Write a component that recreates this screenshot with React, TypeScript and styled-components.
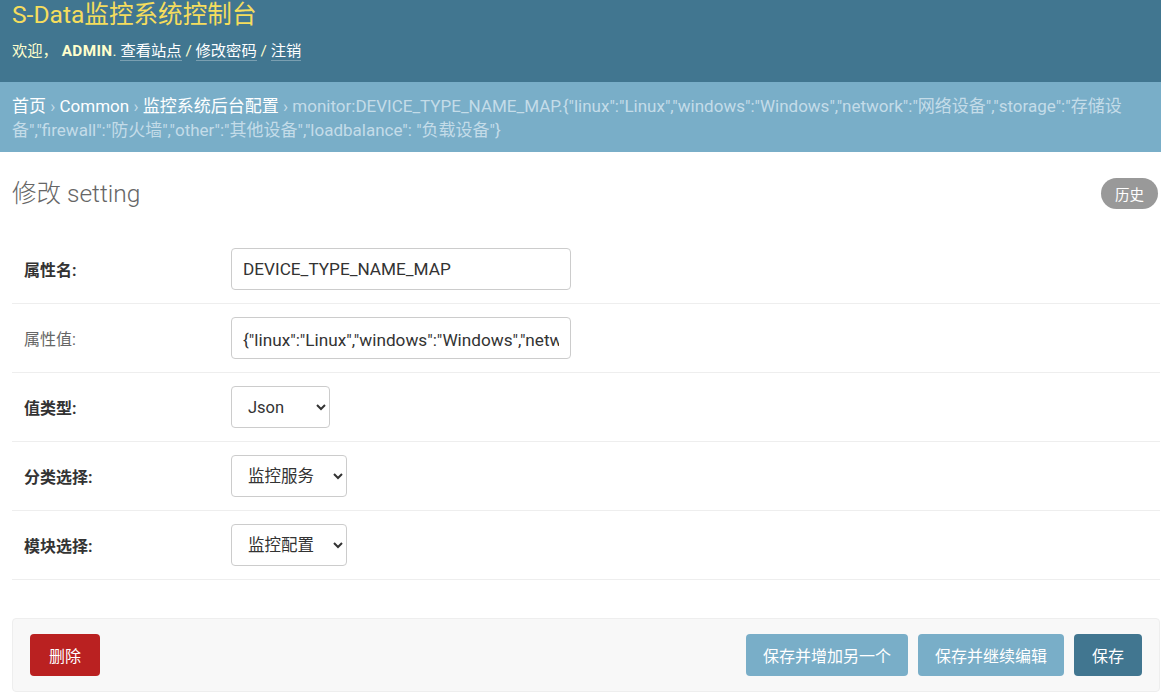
import React from "react";
import styled, { createGlobalStyle } from "styled-components";

const Global = createGlobalStyle`
  html, body { margin: 0; padding: 0; background: #fff; }
  body {
    font-family: Roboto, "Noto Sans CJK SC", "Noto Sans", sans-serif;
    color: #333;
    width: 1161px;
    overflow: hidden;
  }
  * { box-sizing: border-box; }
`;

const Header = styled.header`
  background: #417690;
  height: 82px;
  padding: 1px 12px 0;
  color: #ffc;
`;

const Branding = styled.h1`
  margin: 0;
  font-size: 24.6px;
  line-height: 27px;
  font-weight: 400;
  color: #f5dd5d;
`;

const UserTools = styled.div`
  margin-top: 12px;
  font-size: 15.3px;
  line-height: 22px;
  color: #ffc;
`;

const Strong = styled.strong`
  font-weight: 700;
  letter-spacing: 0.4px;
`;

const ToolLink = styled.a`
  color: #fff;
  text-decoration: none;
  border-bottom: 1px solid rgba(255, 255, 255, 0.3);
`;

const Crumbs = styled.nav`
  background: #79aec8;
  padding: 12px 14px 10px 12px;
  font-size: 17px;
  line-height: 24px;
  color: #c4dce8;
`;

const CrumbLink = styled.a`
  color: #fff;
  text-decoration: none;
`;

const Content = styled.main`
  padding: 26px 1px 0 12px;
`;

const TitleRow = styled.div`
  display: flex;
  justify-content: space-between;
  align-items: center;
  height: 31px;
  padding-right: 2px;
`;

const Title = styled.h2`
  margin: 0;
  font-size: 24.5px;
  font-weight: 300;
  color: #666;
  line-height: 30px;
`;

const HistoryButton = styled.a`
  display: inline-flex;
  align-items: center;
  height: 31px;
  padding: 0 14px;
  border-radius: 16px;
  background: #999;
  color: #fff;
  font-size: 14.5px;
`;

const Fieldset = styled.div`
  margin-top: 26px;
`;

const Row = styled.div`
  display: flex;
  align-items: center;
  padding: 13px 12px;
  border-bottom: 1px solid #eee;
`;

const Label = styled.label<{ $required?: boolean }>`
  width: 207px;
  flex-shrink: 0;
  font-size: 16px;
  font-weight: ${(p) => (p.$required ? 700 : 400)};
  color: ${(p) => (p.$required ? "#333" : "#666")};
`;

const TextInput = styled.input`
  width: 340px;
  height: 42px;
  border: 1px solid #ccc;
  border-radius: 4px;
  padding: 0 11px;
  font-family: Roboto, "Noto Sans CJK SC", sans-serif;
  font-size: 17.2px;
  color: #333;
  background: #fff;
  outline: none;
`;

const Select = styled.select<{ $w: number }>`
  width: ${(p) => p.$w}px;
  height: 42px;
  border: 1px solid #ccc;
  border-radius: 4px;
  padding: 0 8px 0 12px;
  font-family: Roboto, "Noto Sans CJK SC", sans-serif;
  font-size: 16.5px;
  color: #333;
  background: #fff;
`;

const SubmitRow = styled.div`
  margin-top: 38px;
  display: flex;
  align-items: center;
  gap: 10px;
  padding: 15px 17px;
  background: #f8f8f8;
  border: 1px solid #eee;
  border-radius: 4px;
`;

const Spacer = styled.div`
  flex: 1;
`;

const Button = styled.button<{ $tone: "danger" | "light" | "main" }>`
  height: 42px;
  padding: 0 ${(p) => (p.$tone === "danger" ? 19 : p.$tone === "main" ? 18 : 17)}px;
  border: none;
  border-radius: 4px;
  font-family: Roboto, "Noto Sans CJK SC", sans-serif;
  font-size: 16px;
  color: #fff;
  background: ${(p) =>
    p.$tone === "danger" ? "#ba2121" : p.$tone === "main" ? "#417690" : "#79aec8"};
`;

const value =
  '{"linux":"Linux","windows":"Windows","network":"网络设备","storage":"存储设备","firewall":"防火墙","other":"其他设备","loadbalance": "负载设备"}';

export default function App() {
  return (
    <>
      <Global />
      <Header>
        <Branding>S-Data监控系统控制台</Branding>
        <UserTools>
          欢迎， <Strong>ADMIN</Strong>. <ToolLink>查看站点</ToolLink> / <ToolLink>修改密码</ToolLink> /{" "}
          <ToolLink>注销</ToolLink>
        </UserTools>
      </Header>
      <Crumbs>
        <CrumbLink>首页</CrumbLink> › <CrumbLink>Common</CrumbLink> › <CrumbLink>监控系统后台配置</CrumbLink> ›
        monitor:DEVICE_TYPE_NAME_MAP.{value}
      </Crumbs>
      <Content>
        <TitleRow>
          <Title>修改 setting</Title>
          <HistoryButton>历史</HistoryButton>
        </TitleRow>
        <Fieldset>
          <Row>
            <Label $required>属性名:</Label>
            <TextInput defaultValue="DEVICE_TYPE_NAME_MAP" />
          </Row>
          <Row>
            <Label>属性值:</Label>
            <TextInput defaultValue={value} />
          </Row>
          <Row>
            <Label $required>值类型:</Label>
            <Select $w={99} defaultValue="Json">
              <option>Json</option>
            </Select>
          </Row>
          <Row>
            <Label $required>分类选择:</Label>
            <Select $w={116} defaultValue="监控服务">
              <option>监控服务</option>
            </Select>
          </Row>
          <Row>
            <Label $required>模块选择:</Label>
            <Select $w={116} defaultValue="监控配置">
              <option>监控配置</option>
            </Select>
          </Row>
        </Fieldset>
        <SubmitRow>
          <Button $tone="danger">删除</Button>
          <Spacer />
          <Button $tone="light">保存并增加另一个</Button>
          <Button $tone="light">保存并继续编辑</Button>
          <Button $tone="main">保存</Button>
        </SubmitRow>
      </Content>
    </>
  );
}
